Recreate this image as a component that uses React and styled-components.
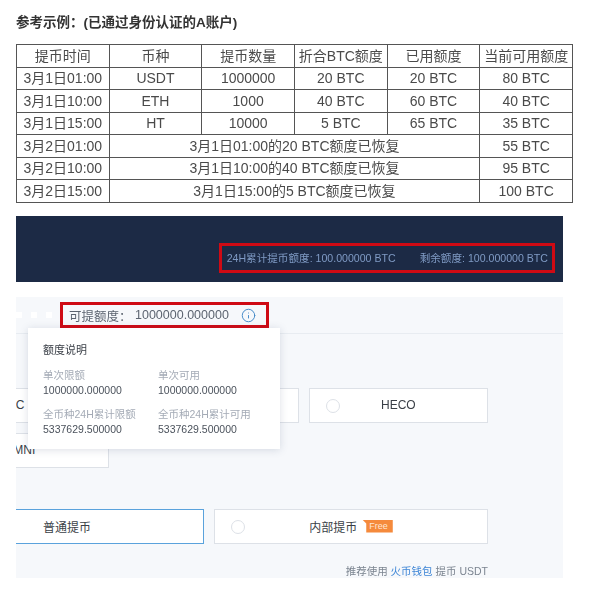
import React from 'react';
import styled, { createGlobalStyle } from 'styled-components';
import { Info } from 'lucide-react';

const FONT = '"Liberation Sans", "Noto Sans CJK SC", sans-serif';

const GlobalStyle = createGlobalStyle`
  html, body {
    margin: 0;
    padding: 0;
    background: #fff;
    font-family: ${FONT};
  }
`;

const HEADERS = ['提币时间', '币种', '提币数量', '折合BTC额度', '已用额度', '当前可用额度'];

const USED_ROWS = [
  ['3月1日01:00', 'USDT', '1000000', '20 BTC', '20 BTC', '80 BTC'],
  ['3月1日10:00', 'ETH', '1000', '40 BTC', '60 BTC', '40 BTC'],
  ['3月1日15:00', 'HT', '10000', '5 BTC', '65 BTC', '35 BTC'],
];

const RESTORED_ROWS = [
  ['3月2日01:00', '3月1日01:00的20 BTC额度已恢复', '55 BTC'],
  ['3月2日10:00', '3月1日10:00的40 BTC额度已恢复', '95 BTC'],
  ['3月2日15:00', '3月1日15:00的5 BTC额度已恢复', '100 BTC'],
];

const QUOTAS = [
  { label: '单次限额', value: '1000000.000000' },
  { label: '单次可用', value: '1000000.000000' },
  { label: '全币种24H累计限额', value: '5337629.500000' },
  { label: '全币种24H累计可用', value: '5337629.500000' },
];

export default function App() {
  return (
    <Page>
      <GlobalStyle />
      <Title>参考示例：(已通过身份认证的A账户)</Title>
      <QuotaTable>
        <tbody>
          <tr>
            {HEADERS.map(header => (
              <Cell key={header}>{header}</Cell>
            ))}
          </tr>
          {USED_ROWS.map(row => (
            <tr key={row[0]}>
              {row.map((value, index) => (
                <Cell key={index}>{value}</Cell>
              ))}
            </tr>
          ))}
          {RESTORED_ROWS.map(row => (
            <tr key={row[0]}>
              <Cell>{row[0]}</Cell>
              <Cell colSpan={4}>{row[1]}</Cell>
              <Cell>{row[2]}</Cell>
            </tr>
          ))}
        </tbody>
      </QuotaTable>

      <Banner>
        <BannerStats>
          <span>24H累计提币额度: 100.000000 BTC</span>
          <span>剩余额度: 100.000000 BTC</span>
        </BannerStats>
      </Banner>

      <Panel>
        <Toolbar>
          <Dots>
            <i />
            <i />
            <i />
          </Dots>
          <Available>
            <span>可提额度：</span>
            <span>1000000.000000</span>
            <Info size={15} strokeWidth={1.5} color="#3f86c6" />
          </Available>
        </Toolbar>

        <Popover>
          <PopoverTitle>额度说明</PopoverTitle>
          <QuotaGrid>
            {QUOTAS.map(item => (
              <div key={item.label}>
                <QuotaLabel>{item.label}</QuotaLabel>
                <QuotaValue>{item.value}</QuotaValue>
              </div>
            ))}
          </QuotaGrid>
        </Popover>

        <Options>
          <ChainGrid>
            <OptionCard nudge={16}>
              <Radio />
              ERC
            </OptionCard>
            <OptionCard />
            <OptionCard>
              <Radio />
              HECO
            </OptionCard>
            <OptionCard>
              <Radio />
              OMNI
            </OptionCard>
          </ChainGrid>
          <TypeGrid>
            <OptionCard selected>
              <Radio />
              普通提币
            </OptionCard>
            <OptionCard>
              <Radio />
              内部提币
              <FreeTag>Free</FreeTag>
            </OptionCard>
          </TypeGrid>
          <Hint>
            推荐使用 <a href="#wallet">火币钱包</a> 提币 USDT
          </Hint>
        </Options>
      </Panel>
    </Page>
  );
}

const Page = styled.div`
  width: 604px;
  height: 597px;
  padding: 14px 0 0 16px;
  box-sizing: border-box;
  overflow: hidden;
  filter: blur(0.35px);
`;

const Title = styled.div`
  height: 30px;
  color: #333;
  font-size: 13.5px;
  font-weight: 700;
  line-height: 17px;
`;

const QuotaTable = styled.table`
  width: 557px;
  border-collapse: collapse;
  table-layout: fixed;
`;

const Cell = styled.td`
  height: 21.5px;
  padding: 0;
  border: 1px solid #555;
  color: #4a4a4a;
  font-size: 14px;
  line-height: 20px;
  text-align: center;
  white-space: nowrap;
`;

const Banner = styled.div`
  display: flex;
  justify-content: flex-end;
  align-items: flex-end;
  box-sizing: border-box;
  width: 547px;
  height: 66px;
  margin-top: 13px;
  padding: 0 8px 9px 0;
  background: #1c2a45;
`;

const BannerStats = styled.div`
  display: flex;
  gap: 24px;
  box-sizing: border-box;
  height: 30px;
  padding: 0 4px 0 5px;
  border: 3px solid #cf0a14;
  color: #7f9ac4;
  font-size: 10.6px;
  line-height: 24px;
  white-space: nowrap;
`;

const Panel = styled.div`
  position: relative;
  width: 547px;
  height: 281px;
  margin-top: 15px;
  overflow: hidden;
  background: #f6f8fb;
`;

const Toolbar = styled.div`
  display: flex;
  align-items: center;
  box-sizing: border-box;
  height: 37px;
  border-bottom: 1px solid #e8ecf1;
`;

const Dots = styled.div`
  display: flex;
  gap: 9px;
  width: 44px;

  i {
    width: 6px;
    height: 6px;
    background: #fff;
  }
`;

const Available = styled.div`
  display: flex;
  align-items: center;
  box-sizing: border-box;
  width: 209px;
  height: 26px;
  padding: 1px 0 0 6px;
  border: 3px solid #cf0a14;
  color: #5c6470;
  font-size: 12.5px;
  white-space: nowrap;

  span:nth-child(1) {
    width: 66px;
  }

  span:nth-child(2) {
    margin-right: 12px;
  }
`;

const Popover = styled.div`
  position: absolute;
  top: 31px;
  left: 12px;
  z-index: 2;
  box-sizing: border-box;
  width: 252px;
  height: 121px;
  padding: 14px 15px;
  background: #fff;
  box-shadow: 0 1px 8px rgba(60, 80, 110, 0.18);
`;

const PopoverTitle = styled.div`
  margin-bottom: 10px;
  color: #3a3f47;
  font-size: 11px;
  line-height: 16px;
`;

const QuotaGrid = styled.div`
  display: grid;
  grid-template-columns: 115px 1fr;
  row-gap: 10px;
`;

const QuotaLabel = styled.div`
  color: #a4abb6;
  font-size: 10.5px;
  line-height: 15px;
  white-space: nowrap;
`;

const QuotaValue = styled.div`
  color: #4b525c;
  font-size: 10.5px;
  line-height: 14px;
`;

const Options = styled.div`
  width: 558px;
  margin: 54px 0 0 -86px;
`;

const ChainGrid = styled.div`
  display: grid;
  grid-template-columns: repeat(3, 1fr);
  gap: 10px;
`;

const TypeGrid = styled.div`
  display: grid;
  grid-template-columns: repeat(2, 1fr);
  gap: 10px;
  margin-top: 41px;
`;

const OptionCard = styled.div`
  position: relative;
  display: flex;
  justify-content: center;
  align-items: center;
  gap: 5px;
  box-sizing: border-box;
  height: 35px;
  padding-right: ${props => props.nudge || 0}px;
  border: 1px solid ${props => (props.selected ? '#5aa2dc' : '#dde1e7')};
  background: #fff;
  color: #3a3f47;
  font-size: 12px;
`;

const Radio = styled.span`
  position: absolute;
  top: 10px;
  left: 16px;
  box-sizing: border-box;
  width: 14px;
  height: 14px;
  border: 1px solid #dde1e7;
  border-radius: 50%;
`;

const FreeTag = styled.span`
  padding: 0 5px 0 7px;
  background: #f58a3c;
  color: #ffe6d2;
  font-size: 9px;
  line-height: 13px;
  clip-path: polygon(0 0, 100% 0, 100% 100%, 4px 100%, 4px 4px);
`;

const Hint = styled.div`
  margin-top: 20px;
  color: #7b8490;
  font-size: 10.5px;
  line-height: 14px;
  text-align: right;

  a {
    color: #3f86d6;
    text-decoration: none;
  }
`;
